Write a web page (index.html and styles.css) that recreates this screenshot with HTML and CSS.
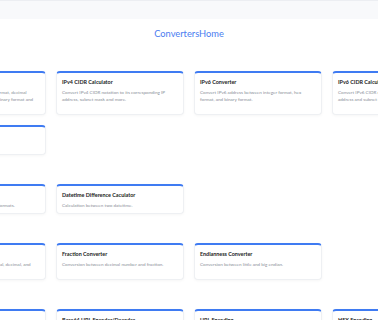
FILE: index.html
```html
<!DOCTYPE html>
<html lang="en">
<head>
    <meta charset="UTF-8">
    <meta name="viewport" content="width=device-width, initial-scale=1.0">
    <title>ConvertersHome</title>
    <link rel="stylesheet" href="styles.css">
</head>
<body>
    <header class="top-bar"></header>

    <h1 class="page-title">ConvertersHome</h1>

    <main class="tools">
        <section class="tool-group">
            <div class="tool-card">
                <h3>IPv4 Converter</h3>
                <p>Convert IPv4 address between hex format, decimal format, integer format, octal format, binary format and IPv4-mapped IPv6 address.</p>
            </div>
            <div class="tool-card">
                <h3>IPv4 CIDR Calculator</h3>
                <p>Convert IPv4 CIDR notation to its corresponding IP address, subnet mask and more.</p>
            </div>
            <div class="tool-card">
                <h3>IPv6 Converter</h3>
                <p>Convert IPv6 address between integer format, hex format, and binary format.</p>
            </div>
            <div class="tool-card">
                <h3>IPv6 CIDR Calculator</h3>
                <p>Convert IPv6 CIDR notation to its corresponding IP address and subnet mask.</p>
            </div>
            <div class="tool-card">
                <h3>IPv4 Range to CIDR</h3>
                <p>Convert IP range to CIDR addresses.</p>
            </div>
        </section>

        <section class="tool-group">
            <div class="tool-card">
                <h3>Timestamp Converter</h3>
                <p>Convert timestamp between various formats.</p>
            </div>
            <div class="tool-card">
                <h3>Datetime Difference Caculator</h3>
                <p>Calculation between two datetime.</p>
            </div>
        </section>

        <section class="tool-group">
            <div class="tool-card">
                <h3>Number Base Converter</h3>
                <p>Convert numbers between binary, octal, decimal, and hexadecimal.</p>
            </div>
            <div class="tool-card">
                <h3>Fraction Converter</h3>
                <p>Conversion between decimal number and fraction.</p>
            </div>
            <div class="tool-card">
                <h3>Endianness Converter</h3>
                <p>Conversion between little and big endian.</p>
            </div>
        </section>

        <section class="tool-group">
            <div class="tool-card">
                <h3>Base64 Encoding</h3>
                <p>Encode and decode Base64 strings.</p>
            </div>
            <div class="tool-card">
                <h3>Base64 URL Encoder/Decoder</h3>
                <p>Encode and decode URL safe Base64 strings.</p>
            </div>
            <div class="tool-card">
                <h3>URL Encoding</h3>
                <p>Encode and decode URL strings.</p>
            </div>
            <div class="tool-card">
                <h3>HEX Encoding</h3>
                <p>Encode and decode HEX strings.</p>
            </div>
        </section>
    </main>
</body>
</html>
```

FILE: styles.css
```css
body {
    margin: 0;
    padding: 0;
    font-family: 'Lato', 'Noto Sans', sans-serif;
    background-color: #fff;
    display: flex;
    flex-direction: column;
    align-items: center;
    overflow-x: hidden;
}

.top-bar {
    align-self: stretch;
    height: 18px;
    background-color: #f8f9fb;
    border-top: 1px solid #eceef2;
}

.page-title {
    margin: 9px 0 0;
    font-size: 9.3px;
    line-height: 12px;
    font-weight: 400;
    color: #4a7cf0;
}

.tools {
    width: 542px;
    flex-shrink: 0;
    margin-top: 31px;
}

.tool-group {
    display: grid;
    grid-template-columns: repeat(4, 128px);
    gap: 10px;
    margin-bottom: 29px;
}

.tool-card {
    background-color: #fff;
    border: 1px solid #eef0f3;
    border-top: 2px solid #3f7bf2;
    border-radius: 4px;
    box-shadow: 0 1px 3px rgba(0, 0, 0, 0.04);
    padding: 6px 5px 4px;
}

.tool-card h3 {
    margin: 0 0 3px;
    font-size: 5.4px;
    line-height: 7px;
    font-weight: 700;
    color: #222;
}

.tool-card p {
    margin: 0;
    font-size: 4.6px;
    line-height: 7px;
    color: #8a8f98;
}
```
